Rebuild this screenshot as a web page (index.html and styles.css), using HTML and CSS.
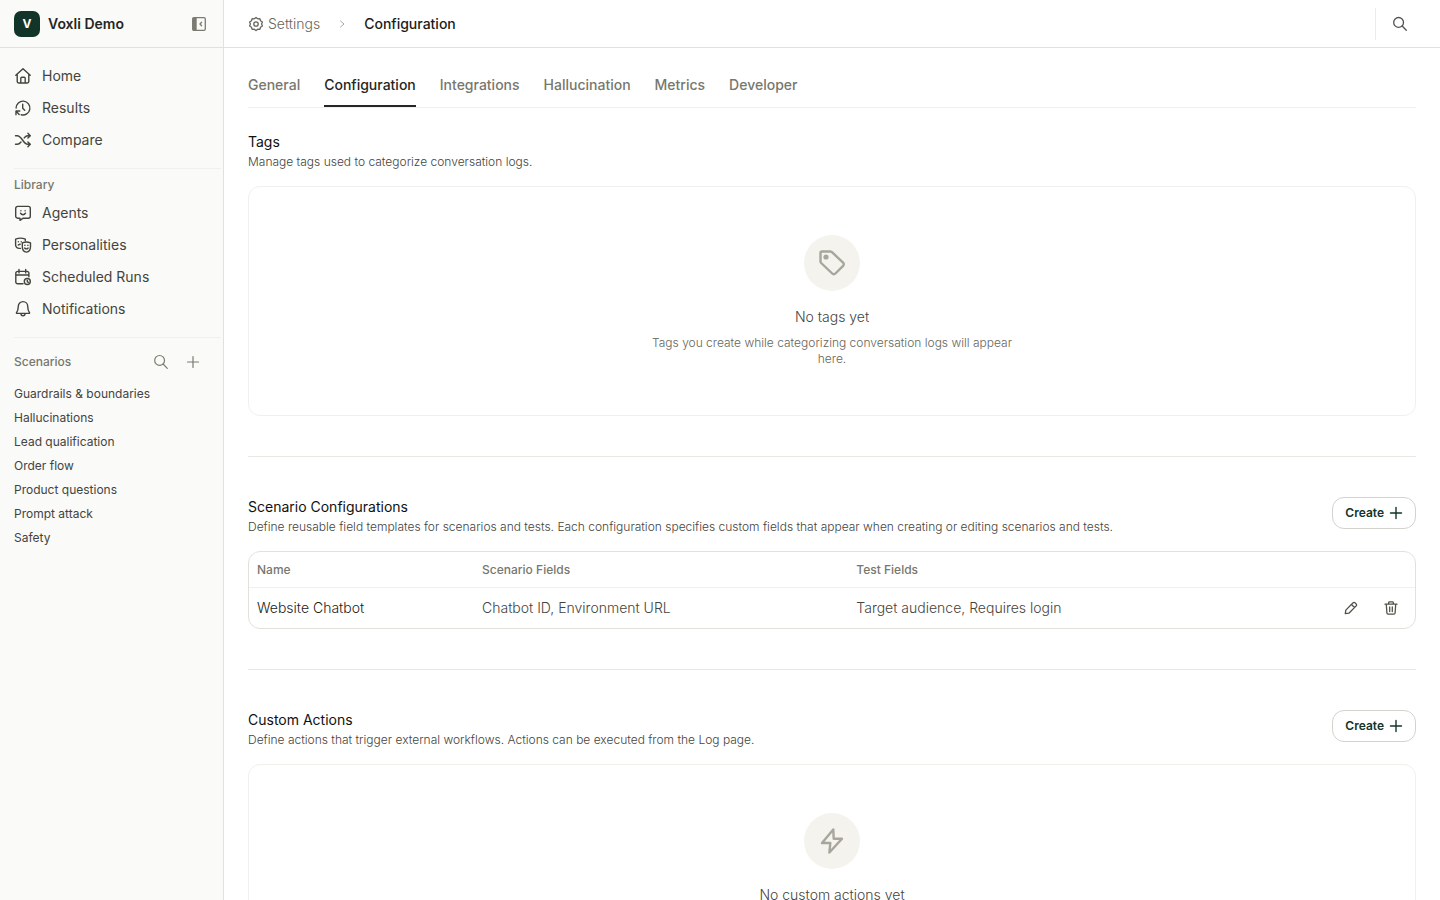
FILE: index.html
```html
<!DOCTYPE html>
<html lang="en">
<head>
<meta charset="utf-8">
<meta name="viewport" content="width=device-width, initial-scale=1">
<title>Configuration - Settings</title>
<link rel="stylesheet" href="styles.css">
</head>
<body>
<svg class="sprite" aria-hidden="true">
  <symbol id="search" viewBox="0 0 16 16"><circle cx="6.6" cy="6.4" r="4.9"/><path d="M10.1 10l4.2 4.3"/></symbol>
  <symbol id="plus" viewBox="0 0 16 16"><path d="M8 2.5v11M2.5 8h11"/></symbol>
</svg>
<div class="app">
  <aside class="sidebar">
    <div class="brand">
      <span class="logo">V</span>
      <span class="brand-name">Voxli Demo</span>
      <button class="icon-button collapse" aria-label="Collapse sidebar">
        <svg class="icon" viewBox="0 0 16 16"><rect x="1.7" y="1.7" width="12.6" height="12.6" rx="1.3"/><path class="fill" d="M1.7 1.7h4v12.6h-4z"/><path d="M10.6 6.3L9 8l1.6 1.7"/></svg>
      </button>
    </div>
    <nav class="nav" aria-label="Main">
      <a class="nav-link" href="#"><svg class="nav-icon" viewBox="0 0 18 18"><path d="M1.8 8.3L9 1.7l7.2 6.6M3.2 7.4v7.2a1.4 1.4 0 0 0 1.4 1.4h8.8a1.4 1.4 0 0 0 1.4-1.4V7.4M6.8 16v-4.8a1 1 0 0 1 1-1h2.4a1 1 0 0 1 1 1V16"/></svg>Home</a>
      <a class="nav-link" href="#"><svg class="nav-icon" viewBox="0 0 18 18"><path d="M2.1 9A6.9 6.9 0 1 1 7.2 15.700M2 15.8v-3.800h3.800M2.2 12.200l3 3.200M8.7 5.3v4l2 1.9"/></svg>Results</a>
      <a class="nav-link" href="#"><svg class="nav-icon" viewBox="0 0 18 18"><path d="M1.5 4.700h1.7c4.8 0 5.8 8.600 10.6 8.600h2.4M1.5 13.300h1.7c1.6 0 2.8-1 3.8-2.300M10.2 6.900c1-1.300 2-2.200 3.6-2.200h2.4M13.900 2.300l2.400 2.400-2.400 2.400M13.900 10.900l2.400 2.400-2.400 2.400"/></svg>Compare</a>
    </nav>
    <nav class="nav group" aria-labelledby="library">
      <h2 class="label" id="library">Library</h2>
      <a class="nav-link" href="#"><svg class="nav-icon" viewBox="0 0 18 18"><path d="M3.7 2.4h10.6a2 2 0 0 1 2 2v7.8a2 2 0 0 1-2 2H9.2L6 16.3v-2.1H3.7a2 2 0 0 1-2-2V4.4a2 2 0 0 1 2-2zM6.5 9.2c1.2 2 3.8 2 5 0M6.9 6.6v.1M11.1 6.6v.1"/></svg>Agents</a>
      <a class="nav-link" href="#"><svg class="nav-icon" viewBox="0 0 18 18"><path d="M6.400 12.400H5.200A3.500 3.500 0 0 1 1.600 9V3.200c3.200-1.300 6.800-1.300 9.700 0v1.400M8.300 6.900c2.600-1.100 5.700-1.100 8.200 0v3.600c0 3.400-1.500 5.300-4.100 5.600-2.600-.3-4.100-2.200-4.100-5.600zM4.300 5.700v.1M7.200 5.700v.1M4.300 9c.6-.5 1.200-.7 1.900-.7M10.900 9.300v.1M13.900 9.300v.1M10.700 12c.9 1.200 2.500 1.200 3.400 0"/></svg>Personalities</a>
      <a class="nav-link" href="#"><svg class="nav-icon" viewBox="0 0 18 18"><path d="M9 15.800H3.600a1.800 1.800 0 0 1-1.800-1.800V5.200a1.800 1.800 0 0 1 1.800-1.800h9.500a1.800 1.800 0 0 1 1.800 1.800v3.500M1.800 7h13.100M5 1.500v3.400M11.700 1.500v3.400M13.300 12.300v1.300l1 .8"/><circle cx="13.300" cy="13.500" r="3"/></svg>Scheduled Runs</a>
      <a class="nav-link" href="#"><svg class="nav-icon" viewBox="0 0 18 18"><path d="M9 1.600a4.700 4.700 0 0 0-4.700 4.700c0 3.200-.8 5-1.800 6.300-.2.300 0 .8.400.8h12.200c.4 0 .6-.5.4-.8-1-1.300-1.800-3.100-1.800-6.300A4.700 4.700 0 0 0 9 1.600zM7 13.700a2 2 0 1 0 4 0"/></svg>Notifications</a>
    </nav>
    <nav class="group scenarios" aria-labelledby="scenarios">
      <div class="scenario-head">
        <h2 class="label" id="scenarios">Scenarios</h2>
        <button class="icon-button" aria-label="Search scenarios"><svg class="icon thin"><use href="#search"/></svg></button>
        <button class="icon-button" aria-label="Add scenario"><svg class="icon thin"><use href="#plus"/></svg></button>
      </div>
      <a class="scenario" href="#">Guardrails &amp; boundaries</a>
      <a class="scenario" href="#">Hallucinations</a>
      <a class="scenario" href="#">Lead qualification</a>
      <a class="scenario" href="#">Order flow</a>
      <a class="scenario" href="#">Product questions</a>
      <a class="scenario" href="#">Prompt attack</a>
      <a class="scenario" href="#">Safety</a>
    </nav>
  </aside>
  <div class="page">
    <header class="topbar">
      <nav class="crumbs" aria-label="Breadcrumb">
        <a class="crumb" href="#"><svg class="icon" viewBox="0 0 16 16"><path d="M8 1.400l1.700 1.400 2.200-.1.600 2.100 1.900 1.200-.8 2 .8 2-1.900 1.200-.6 2.100-2.200-.1L8 14.600l-1.700-1.400-2.200.1-.6-2.100L1.600 10l.8-2-.8-2 1.900-1.200.6-2.100 2.200.1z"/><circle cx="8" cy="8" r="2.200"/></svg>Settings</a>
        <svg class="chevron" viewBox="0 0 8 8"><path d="M2.500 1L6 4 2.500 7"/></svg>
        <span class="current">Configuration</span>
      </nav>
      <div class="tools">
        <button class="icon-button dark" aria-label="Search"><svg class="icon"><use href="#search"/></svg></button>
      </div>
    </header>
    <main class="content">
      <nav class="tabs" aria-label="Settings sections">
        <a class="tab" href="#">General</a>
        <a class="tab active" href="#" aria-current="page">Configuration</a>
        <a class="tab" href="#">Integrations</a>
        <a class="tab" href="#">Hallucination</a>
        <a class="tab" href="#">Metrics</a>
        <a class="tab" href="#">Developer</a>
      </nav>
      <section class="section">
        <div class="section-head">
          <div class="section-text">
            <h2 class="title">Tags</h2>
            <p class="description">Manage tags used to categorize conversation logs.</p>
          </div>
        </div>
        <div class="empty">
          <span class="badge"><svg class="badge-icon" viewBox="0 0 28 28"><path d="M4 2.500h8.200c.7 0 1.300.3 1.800.7l11.100 10.400a2.200 2.200 0 0 1 0 3.200l-7.700 7.700a2.200 2.200 0 0 1-3.200 0L3.200 14a2.500 2.500 0 0 1-.7-1.800V4A1.500 1.500 0 0 1 4 2.500z"/><circle class="dot" cx="8" cy="8" r="2.600"/></svg></span>
          <h3 class="empty-title">No tags yet</h3>
          <p class="empty-text">Tags you create while categorizing conversation logs will appear here.</p>
        </div>
      </section>
      <section class="section">
        <div class="section-head">
          <div class="section-text">
            <h2 class="title">Scenario Configurations</h2>
            <p class="description">Define reusable field templates for scenarios and tests. Each configuration specifies custom fields that appear when creating or editing scenarios and tests.</p>
          </div>
          <button class="create">Create<svg class="icon create-icon"><use href="#plus"/></svg></button>
        </div>
        <div class="table-card">
          <table class="table">
            <thead>
              <tr><th class="col-name">Name</th><th class="col-fields">Scenario Fields</th><th>Test Fields</th><th class="col-actions"></th></tr>
            </thead>
            <tbody>
              <tr>
                <td class="strong">Website Chatbot</td>
                <td>Chatbot ID, Environment URL</td>
                <td>Target audience, Requires login</td>
                <td>
                  <div class="actions">
                    <button class="icon-button dark" aria-label="Edit"><svg class="icon" viewBox="0 0 16 16"><path d="M2.300 13.700l.5-3.600 7.300-7.300a1.300 1.300 0 0 1 1.900 0l1.200 1.200a1.300 1.300 0 0 1 0 1.900l-7.300 7.300zM8.500 4.500l3 3"/></svg></button>
                    <button class="icon-button dark" aria-label="Delete"><svg class="icon" viewBox="0 0 16 16"><path d="M2 4.200h12M5.700 4V2.600a.8.800 0 0 1 .8-.8h3a.8.800 0 0 1 .8.800V4M3.300 4.300l.6 8.700a1.200 1.200 0 0 0 1.200 1.100h5.800a1.200 1.200 0 0 0 1.200-1.100l.6-8.700M6.700 7v4.500M9.300 7v4.500"/></svg></button>
                  </div>
                </td>
              </tr>
            </tbody>
          </table>
        </div>
      </section>
      <section class="section">
        <div class="section-head">
          <div class="section-text">
            <h2 class="title">Custom Actions</h2>
            <p class="description">Define actions that trigger external workflows. Actions can be executed from the Log page.</p>
          </div>
          <button class="create">Create<svg class="icon create-icon"><use href="#plus"/></svg></button>
        </div>
        <div class="empty">
          <span class="badge"><svg class="badge-icon" viewBox="0 0 28 28"><path d="M15.300 2.500L4 16h8.300l-.9 9.500L24 11.800h-8.300z"/></svg></span>
          <h3 class="empty-title">No custom actions yet</h3>
        </div>
      </section>
    </main>
  </div>
</div>
</body>
</html>
```
FILE: styles.css
```css
* { box-sizing: border-box; }
body {
  margin: 0;
  background: #fff;
  color: #44443e;
  font: 300 14px/20px Inter, "Liberation Sans", sans-serif;
}
h2, h3, p { margin: 0; }
a { color: inherit; text-decoration: none; }
button { font: inherit; cursor: pointer; }
svg {
  fill: none;
  stroke: currentColor;
  stroke-width: 1.3;
  stroke-linecap: round;
  stroke-linejoin: round;
  flex: none;
}
.sprite { display: none; }
.app { display: flex; height: 100vh; overflow: hidden; }

.sidebar {
  flex: 0 0 224px;
  background: #fafaf8;
  border-right: 1px solid #e2e2dc;
}
.brand {
  display: flex;
  align-items: center;
  height: 48px;
  padding: 0 8px 0 14px;
  border-bottom: 1px solid #e2e2dc;
}
.logo {
  width: 26px;
  height: 26px;
  margin-right: 8px;
  border-radius: 7px;
  background: #12352a;
  color: #fff;
  font-size: 12px;
  font-weight: 700;
  line-height: 26px;
  text-align: center;
}
.brand-name { flex: 1; color: #262622; font-weight: 600; }
.icon-button {
  display: flex;
  align-items: center;
  justify-content: center;
  width: 32px;
  height: 32px;
  padding: 0;
  border: 0;
  background: none;
  color: #7b7b72;
}
.dark { color: #52524b; }
.icon { width: 16px; height: 16px; }
.thin { stroke-width: 1.2; }
.fill { fill: currentColor; stroke: none; }
.nav { padding-top: 12px; }
.nav-link {
  display: flex;
  align-items: center;
  gap: 10px;
  height: 32px;
  padding: 0 14px;
  font-weight: 400;
}
.nav-icon { width: 18px; height: 18px; stroke-width: 1.4; }
.group { position: relative; margin-top: 12px; padding-top: 9px; }
.group::before {
  content: "";
  position: absolute;
  top: 0;
  left: 14px;
  right: 2px;
  border-top: 1px solid #f0f0ec;
}
.label {
  padding: 0 14px;
  color: #77776d;
  font-size: 12px;
  font-weight: 500;
  line-height: 16px;
}
.nav .label { margin-bottom: 4px; }
.scenario-head {
  display: flex;
  align-items: center;
  padding-right: 14px;
  margin-bottom: 4px;
}
.scenario-head .label { flex: 1; }
.scenario {
  display: block;
  padding: 0 14px;
  font-size: 12px;
  font-weight: 400;
  line-height: 24px;
}

.page { display: flex; flex-direction: column; flex: 1; min-width: 0; }
.topbar {
  display: flex;
  flex: 0 0 48px;
  align-items: center;
  justify-content: space-between;
  padding: 0 24px;
  border-bottom: 1px solid #e2e2dc;
}
.crumbs { display: flex; align-items: center; gap: 18px; }
.crumb { display: flex; align-items: center; gap: 4px; color: #66665d; }
.chevron { width: 8px; height: 8px; color: #a8a89f; stroke-width: 1; }
.current { color: #1c1c19; font-weight: 500; }
.tools { padding: 0 0 0 8px; border-left: 1px solid #ecece8; }
.content { flex: 1; min-height: 0; padding: 24px; overflow: hidden; }

.tabs { display: flex; gap: 24px; border-bottom: 1px solid #f0f0ec; margin-bottom: 24px; }
.tab {
  padding: 3px 0 10px;
  border-bottom: 2px solid transparent;
  color: #77776d;
  font-weight: 500;
}
.active { color: #262622; border-color: #262622; }

.section + .section { margin-top: 40px; padding-top: 40px; border-top: 1px solid #e8e8e3; }
.section-head { display: flex; justify-content: space-between; gap: 16px; margin-bottom: 16px; }
.section-text { display: grid; gap: 2px; }
.title { color: #11110f; font-size: 14px; font-weight: 400; line-height: 20px; }
.description { font-size: 12px; line-height: 16px; }
.create {
  display: flex;
  align-items: center;
  gap: 4px;
  height: 32px;
  padding: 0 11px 0 12px;
  border: 1px solid #d3d3cc;
  border-radius: 12px;
  background: #fff;
  color: #12352a;
  font-size: 12px;
  font-weight: 600;
}
.create-icon { stroke-width: 1.4; }
.empty {
  display: flex;
  flex-direction: column;
  align-items: center;
  padding: 48px;
  border: 1px solid #f0f0ec;
  border-radius: 12px;
  text-align: center;
}
.badge {
  display: flex;
  align-items: center;
  justify-content: center;
  width: 56px;
  height: 56px;
  margin-bottom: 16px;
  border-radius: 50%;
  background: #f4f3ee;
  color: #a8a59b;
}
.badge-icon { width: 28px; height: 28px; stroke-width: 2.4; }
.dot { fill: currentColor; stroke: none; }
.empty-title { font-size: 14px; font-weight: 300; line-height: 20px; }
.empty-text { max-width: 384px; margin-top: 8px; color: #66665d; font-size: 12px; line-height: 16px; }

.table-card { border: 1px solid #e2e2dc; border-radius: 12px; overflow: hidden; }
.table { width: 100%; border-collapse: separate; border-spacing: 0; table-layout: fixed; text-align: left; }
.table th {
  height: 36px;
  padding: 0 8px;
  border-bottom: 1px solid #f0f0ec;
  color: #77776d;
  font-size: 12px;
  font-weight: 500;
}
.table td { height: 40px; padding: 0 8px; }
.col-name { width: 19.3%; }
.col-fields { width: 32.1%; }
.col-actions { width: 96px; }
.table .strong { color: #1c1c19; }
.actions { display: flex; justify-content: flex-end; gap: 8px; }
```
